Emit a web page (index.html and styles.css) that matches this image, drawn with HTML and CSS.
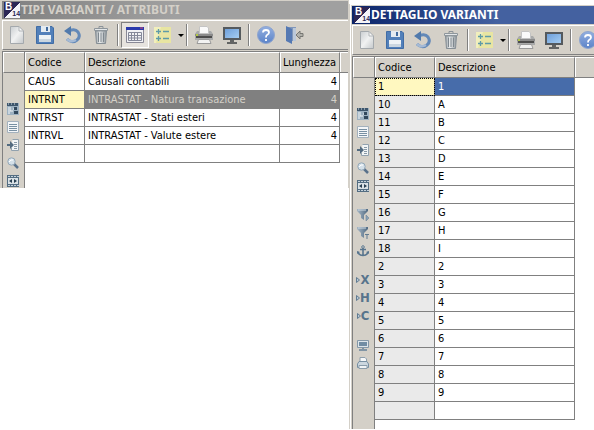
FILE: index.html
```html
<!DOCTYPE html>
<html lang="it">
<head>
<meta charset="utf-8">
<title>Tipi varianti / Attributi</title>
<link rel="stylesheet" href="styles.css">
</head>
<body>
<svg class="sprite" aria-hidden="true">
  <defs>
    <linearGradient id="paper" x1="0" y1="0" x2="1" y2="1"><stop offset="0" stop-color="#c9cdd0"/><stop offset=".5" stop-color="#f1f2f2"/><stop offset="1" stop-color="#c4c8cb"/></linearGradient>
    <linearGradient id="metal" x1="0" y1="0" x2="1" y2="0"><stop offset="0" stop-color="#949ca2"/><stop offset=".4" stop-color="#eceeef"/><stop offset="1" stop-color="#8d959b"/></linearGradient>
    <linearGradient id="screen" x1="0" y1="0" x2="1" y2="1"><stop offset="0" stop-color="#6e9fda"/><stop offset="1" stop-color="#a5cdf2"/></linearGradient>
    <linearGradient id="ball" x1="0" y1="0" x2="0" y2="1"><stop offset="0" stop-color="#93afe0"/><stop offset="1" stop-color="#5b83c8"/></linearGradient>
    <linearGradient id="steel" x1="0" y1="0" x2="1" y2="0"><stop offset="0" stop-color="#a4b5c4"/><stop offset="1" stop-color="#506a82"/></linearGradient>
  </defs>
  <symbol id="new" viewBox="0 0 20 20">
    <path d="M3.500 1.500H12L16.500 6V18.500H3.500Z" fill="url(#paper)" stroke="#a4a9ad"/><path d="M12 1.500V6H16.500Z" fill="#fafafa" stroke="#b0b4b7"/>
  </symbol>
  <symbol id="save" viewBox="0 0 20 20">
    <path d="M1.500 1.500H17L18.500 3V18.500H1.500Z" fill="#5280ba" stroke="#416da5"/><path d="M6 1H15V7H6Z" fill="#e4ebf1"/><path d="M11 2H13V6H11Z" fill="#426b9e"/><path d="M4 10H16V17H4Z" fill="#edf2f5"/><path d="M4 14H16V17H4Z" fill="#cad6e0"/>
  </symbol>
  <symbol id="undo" viewBox="0 0 20 20">
    <path d="M6 6Q12 3 15 7Q18 12 14 15Q9 19 4 14" fill="none" stroke="#6389b8" stroke-width="3"/><path d="M8 1V11L1 6Z" fill="#517aac"/><path d="M4 14Q8 18 13 15" fill="none" stroke="#a5bad5" stroke-width="2.500"/>
  </symbol>
  <symbol id="trash" viewBox="0 0 20 20">
    <path d="M4.500 6H15.500L14.500 18.500H5.500Z" fill="url(#metal)" stroke="#868f96"/><path d="M7.500 7.500V17M10 7.500V17M12.500 7.500V17" stroke="#7f888f"/><path d="M3.500 3.500H16.500V5.500H3.500Z" fill="#e3e6e8" stroke="#8e969c"/><path d="M8 3V1.500H12V3" fill="none" stroke="#8a9299"/>
  </symbol>
  <symbol id="table" viewBox="0 0 20 20">
    <path d="M1.500 2.500H18.500V17.500H1.500Z" fill="#f1f2f5" stroke="#898996"/><path d="M1 2H19V5H1Z" fill="#2939ac"/><path d="M15 3H18" stroke="#d34a75"/><path d="M3.500 7.500H16.500V15.500H3.500ZM6.500 7.500V15.500M9.500 7.500V15.500M12.500 7.500V15.500M3.500 10.500H16.500M3.500 13H16.500" fill="none" stroke="#85899a"/>
  </symbol>
  <symbol id="list" viewBox="0 0 20 20">
    <path d="M1 2H18V18H1Z" fill="#e8e5a2"/><path d="M1 2H8L3 18H1Z" fill="#f1efbc"/><path d="M3 6.500H8M5.500 4V9M3 13.500H8M5.500 11V16M10 6.500H16M10 13.500H16" stroke="#5e9ba8" stroke-width="1.300"/>
  </symbol>
  <symbol id="print" viewBox="0 0 20 20">
    <path d="M3 6H17L19 9V15H1V9Z" fill="#a9aaaa"/><path d="M5.500 8.500V1.500H13L14.500 3V8.500Z" fill="#fafafa" stroke="#c4c4c4"/><path d="M1 9H19V11H1Z" fill="#8a8a8a"/><path d="M2 11H18V13H2Z" fill="#4c4c4c"/><path d="M2 9H4V11H2Z" fill="#b2c846"/><path d="M4.500 14.500H15.500L17 18.500H3Z" fill="#f2f2f2" stroke="#9a9a9a"/>
  </symbol>
  <symbol id="monitor" viewBox="0 0 20 20">
    <path d="M1 2H19V15H1Z" fill="#555a5e"/><path d="M3 4H17V13H3Z" fill="url(#screen)"/><path d="M8 15H12V17H15V19H5V17H8Z" fill="#626464"/>
  </symbol>
  <symbol id="help" viewBox="0 0 20 20">
    <circle cx="10" cy="10" r="8.500" fill="url(#ball)" stroke="#8fa5ce"/><path d="M7 7.500Q7 5 10 5Q13 5 13 7.500Q13 9 11 10Q10 10.500 10 12.500M10 14V16" fill="none" stroke="#fff" stroke-width="1.800"/>
  </symbol>
  <symbol id="exit" viewBox="0 0 20 20">
    <path d="M2 2H12V16H2Z" fill="#8197ba"/><path d="M9 3H12V16H9Z" fill="#bbc8d9"/><path d="M2 1L8 4V19L2 16Z" fill="#5579b3"/><path d="M12 10L16 6V8.500H19V11.500H16V14Z" fill="#b0b0aa" stroke="#777773"/>
  </symbol>
  <symbol id="r-tree" viewBox="0 0 12 12">
    <path d="M0 0H12V12H0Z" fill="#9db1c1"/><path d="M0 0H11V3H0Z" fill="#3e566c"/><path d="M1 1H2M4 1H5M7 1H8" stroke="#d7e1e8"/><path d="M3 4V8H6M6 6H8" fill="none" stroke="#f2f5f7"/><path d="M7 4H10V7H7ZM7 8H11V11H7Z" fill="#32485c"/><path d="M1 4H3V11H1Z" fill="#c9d5de"/>
  </symbol>
  <symbol id="r-list" viewBox="0 0 12 12">
    <path d="M.5.5H11.500V11.500H.5Z" fill="#f4f6f8" stroke="#a3b1bd"/><path d="M2 3.500H10M2 5.500H10M2 7.500H10M2 9.500H10" stroke="#7890a3"/>
  </symbol>
  <symbol id="r-goto" viewBox="0 0 12 12">
    <path d="M5.500.5H11.500V11.500H4.500V9" fill="#f2f5f6" stroke="#91a1ae"/><path d="M7 3.500H10M7 5.500H10M7 7.500H10M7 9.500H10" stroke="#8798a6"/><path d="M0 5H3V2L7 6L3 10V7H0Z" fill="#536b80"/>
  </symbol>
  <symbol id="r-zoom" viewBox="0 0 12 12">
    <path d="M7 7L11 11" stroke="#58708a" stroke-width="2.500"/><circle cx="4.500" cy="4.500" r="3.700" fill="#d4e0e9" stroke="#92a6b7"/><path d="M2 5Q4 2 6 3" fill="none" stroke="#fff"/>
  </symbol>
  <symbol id="r-fit" viewBox="0 0 12 12">
    <path d="M0 0H12V12H0Z" fill="#536d82"/><path d="M1 1.500H12M1 10.500H12" stroke="#c5d1da" stroke-dasharray="2 1"/><path d="M1 3H11V9H1Z" fill="#d9e1e6"/><path d="M2 6L5 4V8ZM10 6L7 4V8Z" fill="#273e50"/>
  </symbol>
  <symbol id="r-filter" viewBox="0 0 12 12">
    <path d="M0 0H11V2L7 6V11L4 9V6L0 2Z" fill="url(#steel)"/><path d="M1 1H9" stroke="#d0dbe3"/><path d="M9 6L12 9L9 12Z" fill="#8ba2b5" stroke="#617b91" stroke-width=".5"/>
  </symbol>
  <symbol id="r-filter-t" viewBox="0 0 12 12">
    <path d="M0 0H11V2L7 6V11L4 9V6L0 2Z" fill="url(#steel)"/><path d="M1 1H9" stroke="#d0dbe3"/><path d="M8 7.500H12M10 7V12" stroke="#617b91"/>
  </symbol>
  <symbol id="r-anchor" viewBox="0 0 12 12">
    <circle cx="6" cy="2" r="1.300" fill="none" stroke="#617d94"/><path d="M6 3V11M3 4.500H9M1 7Q2 10.500 6 10.500Q10 10.500 11 7" fill="none" stroke="#58758e" stroke-width="1.600"/><path d="M0 9V6L3 7ZM12 9V6L9 7Z" fill="#58758e"/>
  </symbol>
  <symbol id="r-arrow" viewBox="0 0 4 12"><path d="M.5 3.500L3.500 6L.5 8.500Z" fill="#b9c8d4" stroke="#617c92"/></symbol>
  <symbol id="r-screen" viewBox="0 0 12 12">
    <path d="M.5 1.500H11.500V8.500H.5Z" fill="#dde5ea" stroke="#8498a8"/><path d="M2 3H10V7H2Z" fill="#718da4"/><path d="M5 9H7V10H10V12H2V10H5Z" fill="#8195a5"/>
  </symbol>
  <symbol id="r-print" viewBox="0 0 12 12">
    <path d="M3 5V.5H8L9.500 2V5" fill="#f6f8f9" stroke="#8e9fac"/><path d="M2 4.500H10L11.500 7V10.500H.5V7Z" fill="#ccd7df" stroke="#7890a3"/><path d="M2 8.500H10V11.500H2Z" fill="#f0f3f5" stroke="#8b9dab"/>
  </symbol>
</svg>

<main class="desktop">
  <section class="window window-types">
    <header class="titlebar inactive"><span class="logo"><b>B</b><small>14</small></span><h1>TIPI VARIANTI / ATTRIBUTI</h1></header>
    <nav class="toolbar" aria-label="Comandi tipi varianti">
      <button class="tool" aria-label="Nuovo"><svg><use href="#new"/></svg></button>
      <button class="tool" aria-label="Salva"><svg><use href="#save"/></svg></button>
      <button class="tool" aria-label="Annulla"><svg><use href="#undo"/></svg></button>
      <button class="tool" aria-label="Elimina"><svg><use href="#trash"/></svg></button>
      <span class="sep"></span>
      <button class="tool pressed" aria-label="Tabella" aria-pressed="true"><svg><use href="#table"/></svg></button>
      <button class="tool" aria-label="Elenco"><svg><use href="#list"/></svg></button>
      <button class="drop" aria-label="Opzioni elenco"></button>
      <span class="sep"></span>
      <button class="tool" aria-label="Stampa"><svg><use href="#print"/></svg></button>
      <button class="tool" aria-label="Video"><svg><use href="#monitor"/></svg></button>
      <span class="sep"></span>
      <button class="tool" aria-label="Guida"><svg><use href="#help"/></svg></button>
      <button class="tool" aria-label="Esci"><svg><use href="#exit"/></svg></button>
    </nav>
    <div class="panel">
      <aside class="rail">
        <div class="rail-head"></div>
        <div class="rail-group">
          <button aria-label="Struttura"><svg><use href="#r-tree"/></svg></button>
          <button aria-label="Lista"><svg><use href="#r-list"/></svg></button>
          <button aria-label="Vai a"><svg><use href="#r-goto"/></svg></button>
          <button aria-label="Cerca"><svg><use href="#r-zoom"/></svg></button>
          <button aria-label="Adatta colonne"><svg><use href="#r-fit"/></svg></button>
        </div>
      </aside>
      <div class="sheet">
        <table>
          <colgroup><col class="c-code"><col><col class="c-len"><col class="c-fill"></colgroup>
          <thead><tr><th>Codice</th><th>Descrizione</th><th class="len">Lunghezza</th><th class="fill"></th></tr></thead>
          <tbody>
            <tr><td>CAUS</td><td>Causali contabili</td><td class="num">4</td></tr>
            <tr class="current"><td class="cell-focus">INTRNT</td><td>INTRASTAT - Natura transazione</td><td class="num">4</td></tr>
            <tr><td>INTRST</td><td>INTRASTAT - Stati esteri</td><td class="num">4</td></tr>
            <tr><td>INTRVL</td><td>INTRASTAT - Valute estere</td><td class="num">4</td></tr>
            <tr><td></td><td></td><td></td></tr>
          </tbody>
        </table>
      </div>
    </div>
  </section>

  <section class="window window-detail">
    <header class="titlebar active"><span class="logo"><b>B</b><small>14</small></span><h2>DETTAGLIO VARIANTI</h2></header>
    <nav class="toolbar" aria-label="Comandi dettaglio varianti">
      <button class="tool" aria-label="Nuovo"><svg><use href="#new"/></svg></button>
      <button class="tool" aria-label="Salva"><svg><use href="#save"/></svg></button>
      <button class="tool" aria-label="Annulla"><svg><use href="#undo"/></svg></button>
      <button class="tool" aria-label="Elimina"><svg><use href="#trash"/></svg></button>
      <span class="sep"></span>
      <button class="tool" aria-label="Elenco"><svg><use href="#list"/></svg></button>
      <button class="drop" aria-label="Opzioni elenco"></button>
      <span class="sep"></span>
      <button class="tool" aria-label="Stampa"><svg><use href="#print"/></svg></button>
      <button class="tool" aria-label="Video"><svg><use href="#monitor"/></svg></button>
      <span class="sep"></span>
      <button class="tool" aria-label="Guida"><svg><use href="#help"/></svg></button>
    </nav>
    <div class="panel">
      <aside class="rail">
        <div class="rail-head"></div>
        <div class="rail-group">
          <button aria-label="Struttura"><svg><use href="#r-tree"/></svg></button>
          <button aria-label="Lista"><svg><use href="#r-list"/></svg></button>
          <button aria-label="Vai a"><svg><use href="#r-goto"/></svg></button>
          <button aria-label="Cerca"><svg><use href="#r-zoom"/></svg></button>
          <button aria-label="Adatta colonne"><svg><use href="#r-fit"/></svg></button>
        </div>
        <div class="rail-group">
          <button aria-label="Filtro"><svg><use href="#r-filter"/></svg></button>
          <button aria-label="Filtro testo"><svg><use href="#r-filter-t"/></svg></button>
          <button aria-label="Ancora"><svg><use href="#r-anchor"/></svg></button>
        </div>
        <div class="rail-group">
          <button class="letter"><svg><use href="#r-arrow"/></svg>X</button>
          <button class="letter"><svg><use href="#r-arrow"/></svg>H</button>
          <button class="letter"><svg><use href="#r-arrow"/></svg>C</button>
        </div>
        <div class="rail-group">
          <button aria-label="Anteprima"><svg><use href="#r-screen"/></svg></button>
          <button aria-label="Stampa"><svg><use href="#r-print"/></svg></button>
        </div>
      </aside>
      <div class="sheet">
        <table class="keyed">
          <colgroup><col class="c-code"><col class="c-desc"><col></colgroup>
          <thead><tr><th>Codice</th><th>Descrizione</th><th class="fill"></th></tr></thead>
          <tbody>
            <tr class="current"><td class="cell-focus">1</td><td>1</td></tr>
            <tr><td>10</td><td>A</td></tr>
            <tr><td>11</td><td>B</td></tr>
            <tr><td>12</td><td>C</td></tr>
            <tr><td>13</td><td>D</td></tr>
            <tr><td>14</td><td>E</td></tr>
            <tr><td>15</td><td>F</td></tr>
            <tr><td>16</td><td>G</td></tr>
            <tr><td>17</td><td>H</td></tr>
            <tr><td>18</td><td>I</td></tr>
            <tr><td>2</td><td>2</td></tr>
            <tr><td>3</td><td>3</td></tr>
            <tr><td>4</td><td>4</td></tr>
            <tr><td>5</td><td>5</td></tr>
            <tr><td>6</td><td>6</td></tr>
            <tr><td>7</td><td>7</td></tr>
            <tr><td>8</td><td>8</td></tr>
            <tr><td>9</td><td>9</td></tr>
            <tr><td></td><td></td></tr>
          </tbody>
        </table>
      </div>
    </div>
  </section>
</main>
</body>
</html>
```
FILE: styles.css
```css
:root {
  --face: #d4d0c8;
  --line: #808080;
  --cream: #fff8c0;
}

* { box-sizing: border-box; }

body {
  margin: 0;
  background: #fff;
  color: #000;
  font: 11px/14px "DejaVu Sans Condensed", "DejaVu Sans", sans-serif;
}

.sprite { position: absolute; width: 0; height: 0; }

.desktop {
  display: grid;
  grid-template-columns: 349fr 245fr;
  align-items: start;
  min-height: 100vh;
}

.window { min-width: 0; background: var(--face); }

.window-types { padding: 1px 1px 0 2px; }

.window-detail {
  display: flex;
  flex-direction: column;
  align-self: stretch;
  margin: 4px 0 1px;
  padding: 2px 0 0 2px;
  border-left: 1px solid var(--face);
  box-shadow: inset 1px 1px #fff;
}

.titlebar {
  display: flex;
  align-items: center;
  gap: 1px;
  height: 18px;
  padding-left: 2px;
}

.titlebar h1,
.titlebar h2 {
  margin: 0;
  font: bold 12px/16px "Noto Sans", "DejaVu Sans Condensed", sans-serif;
  white-space: nowrap;
}

.inactive { background: linear-gradient(90deg, #808080, #a0a0a0 50%); color: var(--face); }
.active { background: linear-gradient(90deg, #0a246a, #4461a0 60%); color: #fff; }

.logo {
  display: flex;
  justify-content: space-between;
  flex: none;
  width: 16px;
  height: 16px;
  padding-left: 1px;
  background: linear-gradient(135deg, #2c2755 52%, #f4f4f8 52%);
}
.logo b {
  color: #fff;
  font: bold 10px/10px "Liberation Sans", sans-serif;
}
.logo small {
  align-self: flex-end;
  color: #2c2755;
  font: bold 7px/8px "Liberation Sans", sans-serif;
}

.toolbar {
  display: flex;
  align-items: center;
  height: 30px;
  margin-top: 1px;
  overflow: hidden;
  border-top: 1px solid #fff;
  border-left: 1px solid #fff;
  border-bottom: 1px solid var(--line);
}

button {
  display: flex;
  align-items: center;
  justify-content: center;
  flex: none;
  padding: 0;
  border: 0;
  background: none;
  color: inherit;
}

.tool { width: 28px; height: 26px; }
.tool svg { width: 20px; height: 20px; }

.pressed {
  border: 1px solid;
  border-color: var(--line) #fff #fff var(--line);
  background: #e6e3de;
}

.drop { width: 7px; height: 26px; }
.drop::before {
  content: "";
  border: 3px solid transparent;
  border-top-color: #000;
  border-bottom: 0;
}

.sep {
  flex: none;
  width: 2px;
  height: 22px;
  margin: 0 2px;
  border-left: 1px solid var(--line);
  border-right: 1px solid #fff;
}

.panel {
  display: flex;
  flex: 1;
  margin-top: 1px;
  border-top: 1px solid var(--line);
  border-left: 1px solid var(--line);
}

.rail {
  flex: none;
  width: 22px;
  padding-bottom: 1px;
  border-right: 1px solid var(--line);
  background: var(--face);
}

.rail-head {
  height: 21px;
  margin-bottom: 30px;
  border-top: 1px solid #fff;
  border-left: 1px solid #fff;
  border-bottom: 1px solid var(--line);
}

.rail-group {
  display: flex;
  flex-direction: column;
  gap: 6px;
}
.rail-group + .rail-group { margin-top: 17px; }
.rail-group button { width: 20px; height: 12px; }
.rail-group svg { width: 12px; height: 12px; }

.rail-group .letter {
  color: #58748c;
  font: bold 13px/12px "Liberation Sans Narrow", "DejaVu Sans Condensed", sans-serif;
}
.rail-group .letter svg { width: 4px; }

.sheet { flex: 1; min-width: 0; background: #fff; }

table {
  width: 100%;
  table-layout: fixed;
  border-collapse: separate;
  border-spacing: 0;
}

.c-code { width: 60px; }
.c-len { width: 60px; }
.c-fill { width: 8px; }
.c-desc { width: 140px; }

th, td {
  padding: 0 2px 0 3px;
  border-right: 1px solid var(--line);
  border-bottom: 1px solid var(--line);
  text-align: left;
  white-space: nowrap;
  font-weight: normal;
}

th {
  height: 21px;
  border-top: 1px solid #fff;
  background: var(--face);
  box-shadow: inset 1px 0 #fff;
}

th.fill { border-right: 0; padding: 0; }

td { height: 18px; }
.num { text-align: right; }

.keyed td:first-child { background: #eaeaea; }

.current td { background: #808080; color: var(--face); }
.keyed .current td { background: #476caa; color: #fff; }

.current td.cell-focus,
.keyed .current td.cell-focus { background: var(--cream); color: #000; }
.keyed .cell-focus { outline: 1px dotted #000; outline-offset: -1px; }
```
